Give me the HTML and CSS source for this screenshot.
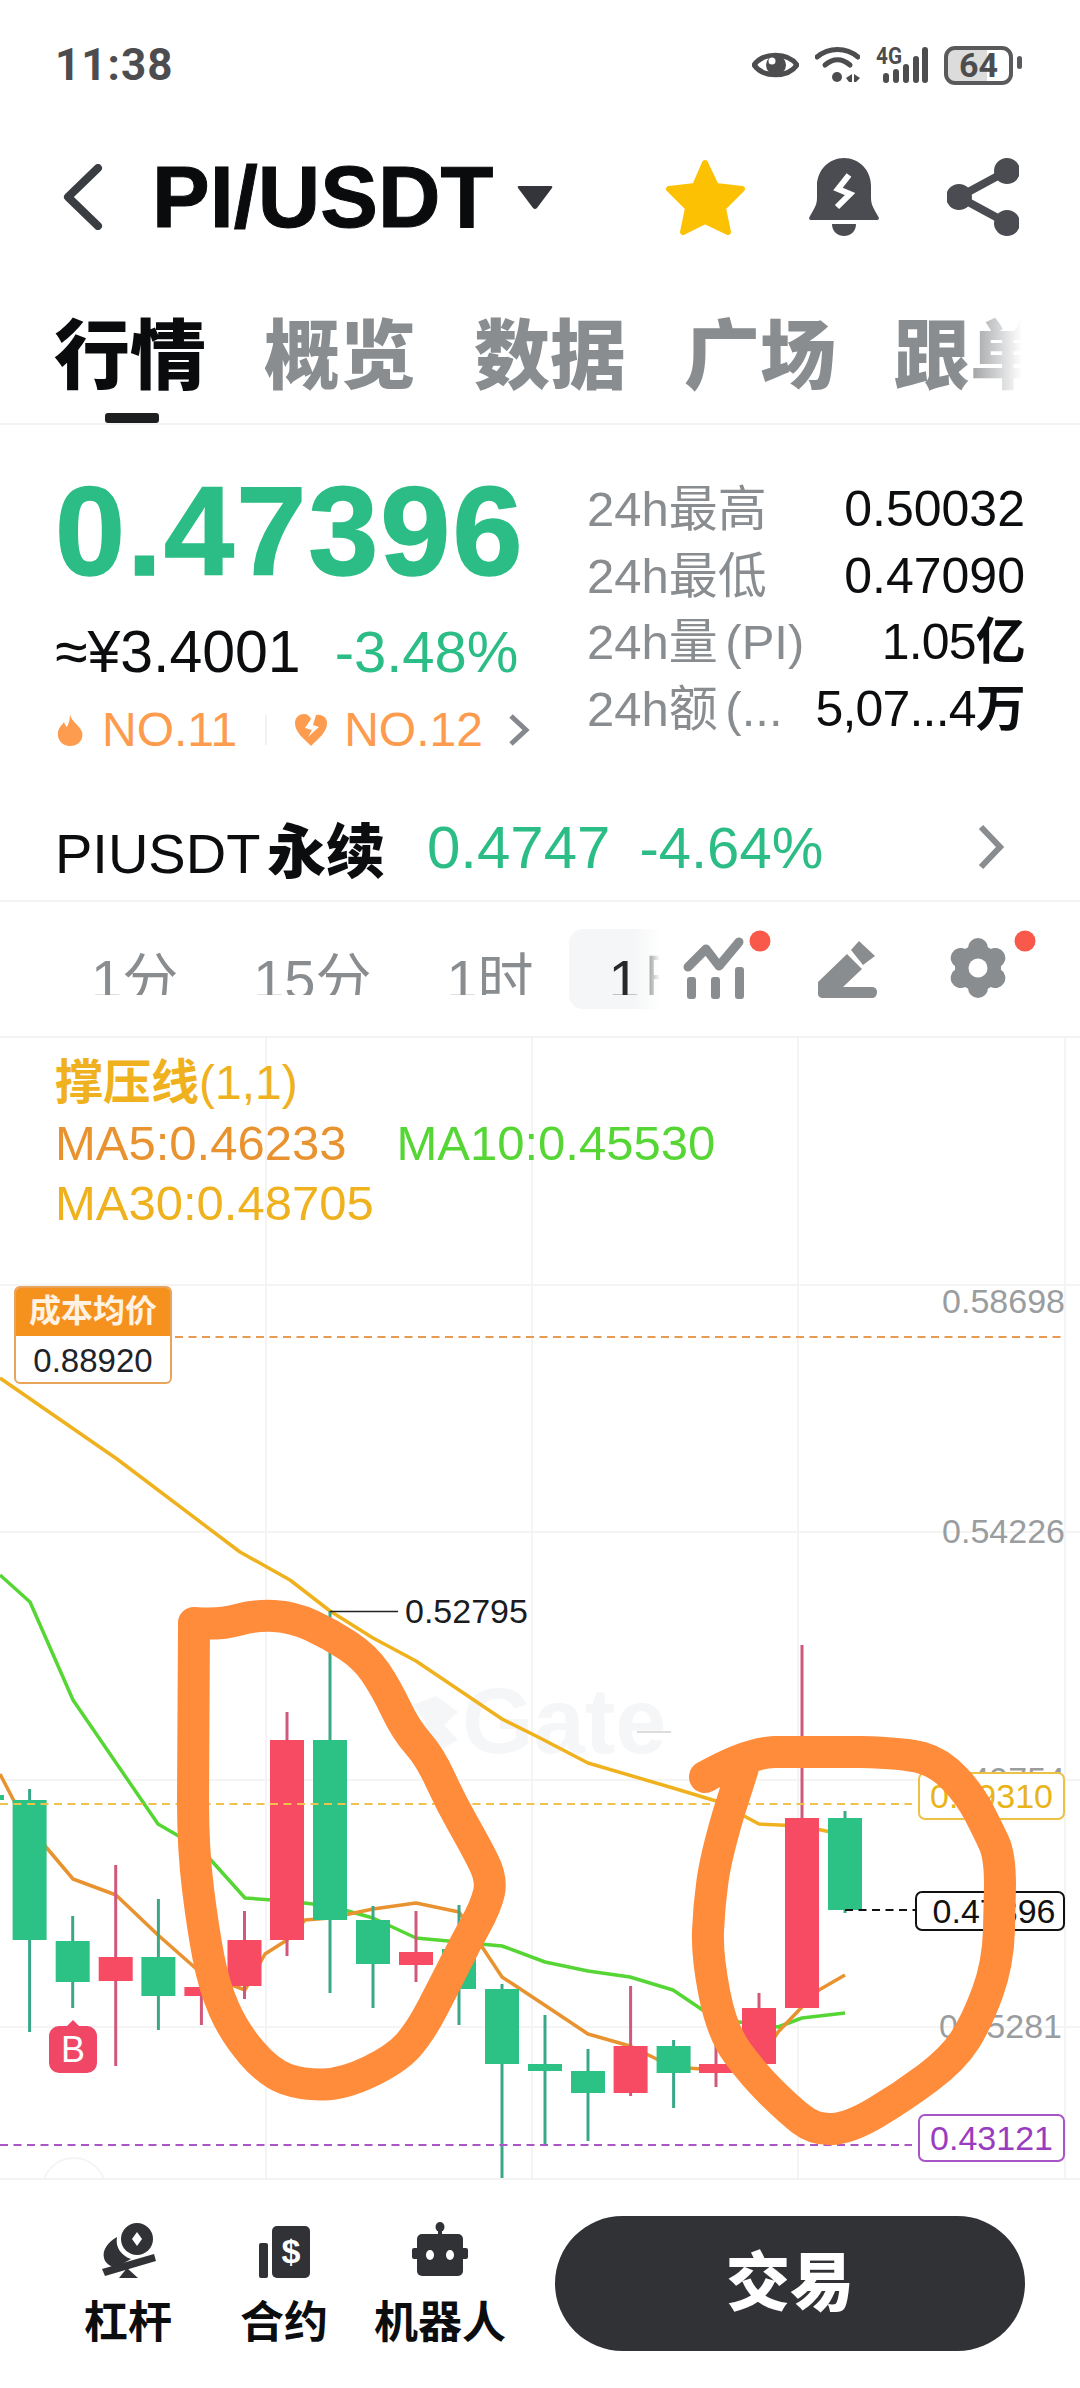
FILE: index.html
```html
<!DOCTYPE html>
<html lang="zh-CN">

<head>
    <meta charset="UTF-8">
    <meta name="viewport" content="width=device-width, initial-scale=1.0">
    <title>PI/USDT</title>
    <link rel="stylesheet" href="styles.css">
</head>

<body>
    <div class="statusbar">
        <span class="time">11:38</span>
        <div class="status-icons">
            <svg width="47" height="32" viewBox="0 0 47 32">
                <path class="ic-outline" d="M2 16C11 3 36 3 45 16C36 29 11 29 2 16Z" />
                <circle class="ic-fill" cx="24" cy="16" r="10" />
                <circle cx="20" cy="12" r="3.5" fill="#fff" />
            </svg>
            <svg width="45" height="36" viewBox="0 0 45 36">
                <path class="ic-outline" d="M2 10C14 0 31 0 43 10" />
                <path class="ic-outline" d="M10 18C18 11 27 11 35 18" />
                <circle class="ic-fill" cx="22" cy="30" r="5" />
                <path class="ic-fill" d="M37 27V35H34L31 31ZM39 27V35H41L45 31Z" />
            </svg>
            <svg width="52" height="36" viewBox="0 0 52 36">
                <text class="ic-4g" x="0" y="17" textLength="26" lengthAdjust="spacingAndGlyphs">4G</text>
                <rect class="ic-fill" x="7" y="26" width="6" height="10" rx="3" />
                <rect class="ic-fill" x="17" y="22" width="6" height="14" rx="3" />
                <rect class="ic-fill" x="27" y="17" width="6" height="19" rx="3" />
                <rect class="ic-fill" x="37" y="9" width="6" height="27" rx="3" />
                <rect class="ic-fill" x="46" y="0" width="6" height="36" rx="3" />
            </svg>
            <div class="battery">64</div>
        </div>
    </div>

    <div class="header">
        <svg class="back" width="42" height="66" viewBox="0 0 42 66">
            <path d="M36 4L6 33L36 62" />
        </svg>
        <span class="pair">PI/USDT</span>
        <svg class="caret" width="36" height="25" viewBox="0 0 36 25">
            <path d="M2 1H34Q36 1 35 3L20 23Q18 25 16 23L1 3Q0 1 2 1Z" />
        </svg>
        <svg class="star" width="81" height="77" viewBox="0 0 81 77">
            <path d="M40 4L51 27L77 30L58 49L63 73L40 62L18 73L23 49L4 30L30 27Z" />
        </svg>
        <svg class="bell" width="70" height="78" viewBox="0 0 70 78">
            <path d="M35 0C50 0 62 12 62 28V40C62 48 66 52 70 60Q70 62 68 62H2Q0 62 0 60C4 52 8 48 8 40V28C8 12 20 0 35 0Z" />
            <path d="M23 66H47C47 74 41 78 35 78C29 78 23 74 23 66Z" />
            <path class="bell-bolt" d="M40 17L29 31L41 36L28 49" />
        </svg>
        <svg class="share" width="72" height="78" viewBox="0 0 72 78">
            <path class="share-line" d="M60 13L12 39L60 65" />
            <circle cx="60" cy="13" r="13" />
            <circle cx="12" cy="39" r="13" />
            <circle cx="60" cy="65" r="13" />
        </svg>
    </div>

    <div class="tabs">
        <span class="tab active">行情</span>
        <span class="tab">概览</span>
        <span class="tab">数据</span>
        <span class="tab">广场</span>
        <span class="tab">跟单</span>
    </div>

    <div class="quote">
        <div class="quote-left">
            <div class="price">0.47396</div>
            <div class="sub-row">
                <span>≈¥3.4001</span>
                <span class="down">-3.48%</span>
            </div>
            <div class="rank-row">
                <svg width="26" height="32" viewBox="0 0 26 32">
                    <path d="M13 0C14 8 22 10 25 18C27 26 21 32 13 32C5 32 0 26 1 18C2 13 5 11 7 8C8 11 9 12 10 13C12 9 13 5 13 0Z" />
                </svg>
                <span class="rank-a">NO.11</span>
                <i class="rank-sep"></i>
                <svg class="rank-heart" width="32" height="32" viewBox="0 0 32 32">
                    <path d="M16 32C8 24 0 18 0 9C0 3 5 0 9 0C12 0 15 2 16 5L10 14L17 16L13 23L24 13L18 11L21 1C28 0 32 4 32 9C32 18 24 24 16 32Z" />
                </svg>
                <span class="rank-b">NO.12</span>
                <svg class="rank-more" width="22" height="32" viewBox="0 0 22 32">
                    <path d="M3 2L18 16L3 30" />
                </svg>
            </div>
        </div>
        <div class="stats">
            <div class="stat"><span class="stat-label">24h最高</span><span class="stat-value">0.50032</span></div>
            <div class="stat"><span class="stat-label">24h最低</span><span class="stat-value">0.47090</span></div>
            <div class="stat"><span class="stat-label">24h量 (PI)</span><span class="stat-value stat-tight">1.05<b>亿</b></span></div>
            <div class="stat"><span class="stat-label">24h额 (...</span><span class="stat-value stat-tight">5,07...4<b>万</b></span></div>
        </div>
    </div>

    <div class="perp">
        <span class="perp-name">PIUSDT <b>永续</b></span>
        <span class="perp-price">0.4747</span>
        <span class="perp-change">-4.64%</span>
        <svg class="perp-more" width="26" height="46" viewBox="0 0 26 46">
            <path d="M3 3L22 23L3 43" />
        </svg>
    </div>

    <div class="periods">
        <div class="period-list">
            <div class="period"><span>1分</span></div>
            <div class="period"><span>15分</span></div>
            <div class="period"><span>1时</span></div>
            <div class="period active"><span>1日</span></div>
        </div>
        <svg class="tool-chart" width="92" height="80" viewBox="0 0 92 80">
            <path class="tool-line" d="M8 38L26 20L39 37L59 13" />
            <rect class="tool-fill" x="7" y="48" width="9" height="22" rx="3" />
            <rect class="tool-fill" x="31" y="48" width="9" height="22" rx="3" />
            <rect class="tool-fill" x="55" y="38" width="9" height="32" rx="3" />
            <circle class="tool-dot" cx="80" cy="12" r="10.5" />
        </svg>
        <svg class="tool-pencil" width="60" height="80" viewBox="0 0 60 80">
            <path class="tool-fill" d="M29 25L44 40L25 58H55Q59 59 59 63Q59 68 55 69H4Q0 68 0 65V53Z" />
            <path class="tool-fill" d="M41 12L57 27L45 36L33 21Z" />
        </svg>
        <svg class="tool-gear" width="90" height="80" viewBox="0 0 90 80">
            <circle class="tool-fill" cx="29" cy="39" r="23" />
            <path class="gear-tooth" d="M29 19V59M11.7 29L46.3 49M46.3 29L11.7 49" />
            <circle cx="29" cy="39" r="9.5" fill="#fff" />
            <circle class="tool-dot" cx="76" cy="12" r="10.5" />
        </svg>
    </div>

    <div class="chart">
        <svg class="chart-canvas" width="1080" height="1140" viewBox="0 1038 1080 1140">
            <path class="grid" d="M266 1038V2178M532 1038V2178M798 1038V2178M1065 1038V2178M0 1285H1080M0 1532H1080M0 1780H1080M0 2027H1080" />
            <text class="watermark" x="462" y="1753">Gate</text>
            <path class="watermark-logo" d="M412 1705L436 1696L458 1712L444 1725L458 1740L436 1752L412 1736L426 1722Z" />
            <path class="watermark-mark" d="M637 1732H671" />

            <polyline class="ma30" points="0,1378 117,1459 240,1552 290,1580 330,1611 373,1638 416,1661 502,1719 540,1738 588,1763 673,1788 716,1801 759,1824 802,1826 845,1835" />
            <polyline class="ma10" points="0,1575 30,1602 73,1700 158,1824 201,1849 245,1898 287,1901 330,1906 373,1918 416,1938 459,1942 502,1946 545,1962 588,1971 630,1977 673,1990 716,2019 778,2027 802,2018 845,2013" />
            <polyline class="ma5" points="0,1774 14,1801 46,1847 73,1879 116,1895 158,1935 201,1973 245,1990 265,1954 287,1940 305,1920 330,1918 373,1909 416,1903 459,1912 502,1977 540,2002 588,2034 630,2046 673,2067 716,2070 759,2062 778,2032 802,2007 819,1990 845,1975" />

            <g class="candle-up">
                <rect x="-8" y="1795" width="12" height="5" />
                <line x1="29.6" x2="29.6" y1="1789" y2="2032" /><rect x="12.6" y="1800" width="34" height="140" />
                <line x1="72.7" x2="72.7" y1="1916" y2="2008" /><rect x="55.7" y="1941" width="34" height="41" />
                <line x1="158.4" x2="158.4" y1="1899" y2="2030" /><rect x="141.4" y="1957" width="34" height="39" />
                <line x1="330" x2="330" y1="1611" y2="1993" /><rect x="313" y="1740" width="34" height="180" />
                <line x1="373" x2="373" y1="1906" y2="2008" /><rect x="356" y="1920" width="34" height="44" />
                <line x1="459" x2="459" y1="1905" y2="2025" /><rect x="442" y="1949" width="34" height="40" />
                <line x1="502" x2="502" y1="1984" y2="2178" /><rect x="485" y="1989" width="34" height="75" />
                <line x1="545" x2="545" y1="2015" y2="2146" /><rect x="528" y="2064" width="34" height="7" />
                <line x1="588" x2="588" y1="2049" y2="2141" /><rect x="571" y="2071" width="34" height="22" />
                <line x1="673.6" x2="673.6" y1="2040" y2="2108" /><rect x="656.6" y="2046" width="34" height="27" />
                <line x1="845" x2="845" y1="1811" y2="1913" /><rect x="828" y="1818" width="34" height="92" />
            </g>
            <g class="candle-down">
                <line x1="115.7" x2="115.7" y1="1865" y2="2066" /><rect x="98.7" y="1957" width="34" height="24" />
                <line x1="201.4" x2="201.4" y1="1973" y2="2025" /><rect x="184.4" y="1987" width="34" height="9" />
                <line x1="244.5" x2="244.5" y1="1911" y2="1999" /><rect x="227.5" y="1940" width="34" height="46" />
                <line x1="287" x2="287" y1="1712" y2="1956" /><rect x="270" y="1740" width="34" height="200" />
                <line x1="416" x2="416" y1="1911" y2="1982" /><rect x="399" y="1952" width="34" height="13" />
                <line x1="630.6" x2="630.6" y1="1986" y2="2096" /><rect x="613.6" y="2046" width="34" height="47" />
                <line x1="716" x2="716" y1="2021" y2="2087" /><rect x="699" y="2064" width="34" height="9" />
                <line x1="759" x2="759" y1="1993" y2="2064" /><rect x="742" y="2008" width="34" height="56" />
                <line x1="802" x2="802" y1="1645" y2="2008" /><rect x="785" y="1818" width="34" height="190" />
            </g>

            <path class="dash-cost" d="M175 1337H1062" />
            <path class="dash-pos" d="M0 1804H912" />
            <path class="dash-low" d="M0 2145H912" />
            <path class="dash-last" d="M845 1910H915" />
            <path class="leader" d="M330 1611.5H398" />
        </svg>

        <div class="legend">
            <div class="legend-title"><b>撑压线</b>(1,1)</div>
            <div class="legend-row">
                <span class="legend-ma5">MA5:0.46233</span>
                <span class="legend-ma10">MA10:0.45530</span>
            </div>
            <div class="legend-row">
                <span class="legend-ma30">MA30:0.48705</span>
            </div>
        </div>

        <div class="cost-tag">
            <div class="cost-title">成本均价</div>
            <div class="cost-value">0.88920</div>
        </div>

        <span class="axis axis-1">0.58698</span>
        <span class="axis axis-2">0.54226</span>
        <span class="axis axis-3">0.49754</span>
        <span class="axis axis-4">0.45281</span>
        <span class="high-label">0.52795</span>

        <span class="tag tag-pos">0.49310</span>
        <span class="tag tag-last">0.47396</span>
        <span class="tag tag-low">0.43121</span>

        <span class="buy-mark">B</span>
        <i class="scroll-btn"></i>

        <!-- hand drawn circles sit over everything in the chart -->
        <svg class="chart-marks" width="1080" height="1140" viewBox="0 1038 1080 1140">
            <path class="scribble" d="M194 1623Q220 1625 237.5 1620Q255 1615 274 1616Q293 1617 311.5 1625.5Q330 1634 347.5 1645.5Q365 1657 375.5 1672.5Q386 1688 396 1709Q406 1730 418 1743.5Q430 1757 440.5 1780Q451 1803 463 1824Q475 1845 483.5 1862Q492 1879 489 1892.5Q486 1906 475.5 1925Q465 1944 454.5 1965Q444 1986 432 2009Q420 2032 408 2045.5Q396 2059 370 2071.5Q344 2084 323.5 2084.5Q303 2085 286 2079Q269 2073 251.5 2052.5Q234 2032 224 2009Q214 1986 208.5 1957.5Q203 1929 198 1889Q193 1849 193 1801L194 1623" />
            <path class="scribble" d="M705 1777Q747 1753 774.5 1752L860 1752Q905 1753 922.5 1758Q940 1763 955 1779Q970 1795 979 1812.5Q988 1830 994 1843Q1000 1856 1000 1885L999 1930Q998 1964 987.5 1992.5Q977 2021 965 2040Q953 2059 927.5 2078Q902 2097 876 2112.5Q850 2128 832.5 2129Q815 2130 801.5 2119.5Q788 2109 770.5 2091.5Q753 2074 737.5 2053Q722 2032 714.5 1994Q707 1956 708 1931Q709 1906 712.5 1881Q716 1856 729 1812L743 1768" />
        </svg>
    </div>

    <div class="bottom-bar">
        <div class="bar-item">
            <svg width="56" height="56" viewBox="0 0 56 56">
                <circle class="bar-ic" cx="37" cy="17" r="16" />
                <path d="M37 10L42 17L37 24L32 17Z" fill="#fff" />
                <path class="bar-ic" d="M17 15C8 20 2 28 4 36C5 41 10 44 15 46L31 37C22 34 15 26 17 15Z" />
                <path class="bar-ic" d="M2 47L54 32L56 39L5 54Z" />
                <path class="bar-ic" d="M27 46L38 56H19Z" />
            </svg>
            <span>杠杆</span>
        </div>
        <div class="bar-item">
            <svg width="52" height="56" viewBox="0 0 52 56">
                <rect class="bar-ic" x="1" y="21" width="9" height="35" rx="2" />
                <rect class="bar-ic" x="14" y="4" width="38" height="52" rx="5" />
                <text class="bar-dollar" x="33" y="41">$</text>
            </svg>
            <span>合约</span>
        </div>
        <div class="bar-item">
            <svg width="56" height="56" viewBox="0 0 56 56">
                <ellipse class="bar-ic" cx="28" cy="5" rx="4.5" ry="5" />
                <rect class="bar-ic" x="26" y="8" width="4" height="6" />
                <rect class="bar-ic" x="5" y="12" width="46" height="42" rx="5" />
                <rect class="bar-ic" x="0" y="26" width="56" height="11" rx="2" />
                <ellipse cx="18" cy="33" rx="4" ry="5" fill="#fff" />
                <ellipse cx="38" cy="33" rx="4" ry="5" fill="#fff" />
            </svg>
            <span>机器人</span>
        </div>
        <div class="trade-btn">交易</div>
    </div>
</body>

</html>
```

FILE: styles.css
```css
* {
    box-sizing: border-box;
}

body {
    margin: 0;
    width: 1080px;
    height: 2388px;
    overflow: hidden;
    background-color: #fff;
    color: #0c0d0f;
    font-family: "Liberation Sans", "Noto Sans CJK SC", sans-serif;
}

/* status bar */
.statusbar {
    height: 124px;
    padding: 6px 59px 0 55px;
    display: flex;
    align-items: center;
    justify-content: space-between;
}

.time {
    font-family: Roboto, sans-serif;
    font-size: 44px;
    font-weight: 700;
    letter-spacing: 1px;
    color: #4d4d4f;
}

.status-icons {
    display: flex;
    align-items: center;
    gap: 16px;
}

.ic-outline {
    fill: none;
    stroke: #4d4d4f;
    stroke-width: 5;
    stroke-linecap: round;
}

.ic-fill {
    fill: #4d4d4f;
}

.ic-4g {
    font-family: Roboto, sans-serif;
    font-size: 23px;
    font-weight: 700;
    fill: #4d4d4f;
}

.battery {
    position: relative;
    width: 69px;
    height: 39px;
    margin-right: 8px;
    border: 4px solid #5a5a5c;
    border-radius: 11px;
    background: linear-gradient(90deg, #dcdcdc 64%, #fff 64%);
    font-family: Roboto, sans-serif;
    font-size: 34px;
    font-weight: 700;
    line-height: 31px;
    text-align: center;
    color: #4d4d4f;
}

.battery::after {
    content: "";
    position: absolute;
    right: -13px;
    top: 6px;
    width: 5px;
    height: 13px;
    border-radius: 3px;
    background-color: #5a5a5c;
}

/* header */
.header {
    height: 146px;
    padding-left: 62px;
    display: flex;
    align-items: center;
    position: relative;
}

.back path {
    fill: none;
    stroke: #3a3d42;
    stroke-width: 8;
    stroke-linejoin: round;
    stroke-linecap: round;
}

.pair {
    margin-left: 48px;
    font-size: 86.5px;
    font-weight: 700;
    line-height: 90px;
    color: #0a0b0d;
    -webkit-text-stroke: 1px #0a0b0d;
}

.caret {
    margin-left: 24px;
}

.caret path {
    fill: #33353a;
}

.star {
    margin-left: 112px;
}

.star path {
    fill: #fdc104;
    stroke: #fdc104;
    stroke-width: 6;
    stroke-linejoin: round;
}

.bell {
    margin-left: 63px;
}

.bell path {
    fill: #4a4c52;
}

.bell .bell-bolt {
    fill: none;
    stroke: #fff;
    stroke-width: 6;
}

.share {
    margin-left: 68px;
    fill: #4a4c52;
}

.share-line {
    fill: none;
    stroke: #4a4c52;
    stroke-width: 8;
}

/* tabs */
.tabs {
    position: relative;
    height: 155px;
    padding: 49px 0 0 54px;
    display: flex;
    gap: 58px;
    border-bottom: 2px solid #f3f3f3;
    overflow: hidden;
}

.tabs::after {
    content: "";
    position: absolute;
    left: 960px;
    top: 0;
    width: 120px;
    height: 150px;
    background: linear-gradient(90deg, rgba(255, 255, 255, 0), #fff 62px);
}

.tab {
    position: relative;
    height: 104px;
    font-size: 76px;
    font-weight: 900;
    line-height: 76px;
    white-space: nowrap;
    color: #8a8d90;
}

.tab.active {
    color: #0a0b0d;
}

.tab.active::after {
    content: "";
    position: absolute;
    left: 51px;
    bottom: 0;
    width: 54px;
    height: 10px;
    border-radius: 3px;
    background-color: #1d1e20;
}

/* price block */
.quote {
    height: 369px;
    display: flex;
}

.quote-left {
    width: 587px;
    padding: 43px 0 0 55px;
}

.price {
    font-size: 126px;
    font-weight: 700;
    letter-spacing: 2px;
    line-height: 128px;
    white-space: nowrap;
    color: #2bbd85;
    -webkit-text-stroke: 1.5px #2bbd85;
}

.sub-row {
    margin-top: 28px;
    display: flex;
    gap: 34px;
    font-size: 59px;
    line-height: 56px;
    color: #0c0d0f;
}

.sub-row .down {
    font-size: 58px;
    color: #2bbd85;
}

.rank-row {
    margin: 27px 0 0 2px;
    display: flex;
    align-items: center;
    font-size: 48px;
    line-height: 46px;
    color: #fd9b4e;
}

.rank-row svg {
    flex: none;
    fill: #fd9b4e;
}

.rank-a,
.rank-b {
    margin-left: 19px;
}

.rank-b {
    margin-left: 17px;
}

.rank-sep {
    width: 2px;
    height: 30px;
    margin: 0 28px 0 28px;
    background-color: #f1f1f1;
}

.rank-row .rank-more {
    margin-left: 25px;
    fill: none;
}

.rank-more path {
    fill: none;
    stroke: #85888c;
    stroke-width: 5;
}

.stats {
    width: 438px;
    padding-top: 51px;
}

.stat {
    height: 66.7px;
    display: flex;
    align-items: baseline;
    justify-content: space-between;
    font-size: 49px;
    line-height: 66.7px;
    white-space: nowrap;
}

.stat-label {
    word-spacing: -6px;
    color: #8a8d90;
}

.stat-value {
    font-size: 50px;
    color: #0c0d0f;
}

.stat-tight {
    letter-spacing: -0.8px;
}

/* perpetual row */
.perp {
    height: 108px;
    padding: 0 76px 0 55px;
    display: flex;
    align-items: center;
    border-bottom: 2px solid #f3f3f3;
    font-size: 56px;
    white-space: nowrap;
}

.perp-name {
    word-spacing: -8px;
}

.perp-name b {
    font-size: 59px;
    font-weight: 900;
}

.perp-price {
    margin-left: 42px;
    font-size: 60px;
    color: #2bbd85;
}

.perp-change {
    margin-left: 29px;
    font-size: 58px;
    color: #2bbd85;
}

.perp-more {
    margin-left: auto;
}

.perp-more path {
    fill: none;
    stroke: #8a8d90;
    stroke-width: 6;
}

/* period row */
.periods {
    height: 136px;
    display: flex;
    align-items: center;
    border-bottom: 2px solid #f3f3f3;
}

.period-list {
    position: relative;
    width: 660px;
    height: 80px;
    padding-left: 91px;
    display: flex;
    gap: 75px;
    overflow: hidden;
}

.period-list::after {
    content: "";
    position: absolute;
    right: 0;
    top: 0;
    width: 26px;
    height: 80px;
    background: linear-gradient(90deg, rgba(255, 255, 255, 0), #fff);
}

.period {
    flex: none;
    height: 66px;
    overflow: hidden;
    font-size: 56px;
    line-height: 102px;
    white-space: nowrap;
    color: #8a8d90;
}

.period.active {
    height: 80px;
    width: 200px;
    margin-left: -40px;
    padding-left: 40px;
    border-radius: 14px;
    background-color: #f5f6f7;
    color: #26282c;
}

.period.active span {
    display: block;
    height: 66px;
    overflow: hidden;
}

.tool-chart {
    margin-left: 20px;
}

.tool-pencil {
    margin-left: 46px;
}

.tool-gear {
    margin-left: 71px;
}

.tool-line {
    fill: none;
    stroke: #8a8d90;
    stroke-width: 9;
    stroke-linecap: round;
    stroke-linejoin: round;
}

.tool-fill {
    fill: #8a8d90;
}

.tool-dot {
    fill: #f9594a;
}

.gear-tooth {
    fill: none;
    stroke: #8a8d90;
    stroke-width: 20;
    stroke-linecap: round;
}

/* chart */
.chart {
    position: relative;
    height: 1142px;
    border-bottom: 2px solid #f3f3f3;
    overflow: hidden;
}

.chart-canvas,
.chart-marks {
    position: absolute;
    left: 0;
    top: 0;
}

.grid {
    fill: none;
    stroke: #f4f4f5;
    stroke-width: 2;
}

.watermark {
    font-size: 92px;
    font-weight: 700;
    fill: #f5f6f7;
}

.watermark-logo {
    fill: #f5f6f7;
}

.watermark-mark {
    stroke: #b9b9b9;
    stroke-width: 1;
}

.ma5,
.ma10,
.ma30 {
    fill: none;
    stroke-width: 3.5;
    stroke-linejoin: round;
}

.ma5 {
    stroke: #e8932f;
}

.ma10 {
    stroke: #56d634;
}

.ma30 {
    stroke: #efb21e;
}

.candle-up rect {
    fill: #2cc185;
}

.candle-up line {
    stroke: #3aa888;
    stroke-width: 3;
}

.candle-down rect {
    fill: #f74b64;
}

.candle-down line {
    stroke: #d0587a;
    stroke-width: 3;
}

.dash-cost,
.dash-pos,
.dash-low,
.dash-last {
    fill: none;
    stroke-width: 2;
    stroke-dasharray: 8 5.5;
}

.dash-cost {
    stroke: #e89a50;
}

.dash-pos {
    stroke: #eec24c;
}

.dash-low {
    stroke: #ab55c9;
}

.dash-last {
    stroke: #111;
}

.leader {
    fill: none;
    stroke: #222;
    stroke-width: 1.5;
}

.legend {
    position: relative;
    padding: 15px 0 0 55px;
    font-size: 49px;
    line-height: 60px;
    white-space: nowrap;
}

.legend-title {
    height: 60px;
    font-size: 48px;
    color: #efb21e;
}

.legend-row {
    display: flex;
    gap: 50px;
}

.legend-ma5 {
    color: #e8932f;
}

.legend-ma10 {
    color: #56d634;
}

.legend-ma30 {
    color: #efb21e;
}

.cost-tag {
    position: absolute;
    left: 14px;
    top: 248px;
    width: 158px;
    height: 98px;
    border: 2px solid #e9a45c;
    border-radius: 6px;
    background-color: #fff;
    overflow: hidden;
    text-align: center;
}

.cost-title {
    height: 48px;
    background-color: #f5921e;
    font-size: 32px;
    font-weight: 700;
    line-height: 46px;
    color: #fff2e2;
}

.cost-value {
    font-size: 33px;
    line-height: 50px;
    color: #1f2329;
}

.axis {
    position: absolute;
    right: 15px;
    font-size: 34px;
    line-height: 40px;
    color: #9a9da0;
}

.axis-1 {
    top: 243px;
}

.axis-2 {
    top: 473px;
}

.axis-3 {
    top: 721px;
}

.axis-4 {
    top: 968px;
    right: 18px;
}

.high-label {
    position: absolute;
    left: 405px;
    top: 553px;
    font-size: 34px;
    line-height: 40px;
    color: #1b1c1f;
}

.tag {
    position: absolute;
    left: 918px;
    width: 147px;
    height: 48px;
    border: 2px solid;
    border-radius: 7px;
    background-color: #fff;
    font-size: 34px;
    line-height: 44px;
    text-align: center;
}

.tag-pos {
    top: 734px;
    border-color: #edc244;
    color: #e8b418;
}

.tag-last {
    left: 915px;
    top: 853px;
    width: 150px;
    height: 40px;
    border-color: #111;
    line-height: 36px;
    padding-left: 8px;
    color: #111;
}

.tag-low {
    top: 1076px;
    border-color: #a855c8;
    color: #9a3cc0;
}

.buy-mark {
    position: absolute;
    left: 49px;
    top: 988px;
    width: 48px;
    height: 47px;
    border-radius: 10px;
    background-color: #ef4765;
    font-size: 36px;
    line-height: 47px;
    text-align: center;
    color: #fff;
}

.buy-mark::before {
    content: "";
    position: absolute;
    left: 18px;
    top: -6px;
    border: 6px solid transparent;
    border-top: 0;
    border-bottom-color: #ef4765;
}

.scroll-btn {
    position: absolute;
    left: 41px;
    top: 1119px;
    width: 66px;
    height: 66px;
    border: 2px solid #f5f5f5;
    border-radius: 50%;
}

.scribble {
    fill: none;
    stroke: #ff8c3a;
    stroke-width: 32;
    stroke-linecap: round;
    stroke-linejoin: round;
}

/* bottom bar */
.bottom-bar {
    padding: 36px 0 0 50px;
    display: flex;
}

.bar-item {
    width: 156px;
    padding-top: 6px;
    display: flex;
    flex-direction: column;
    align-items: center;
    gap: 24px;
    font-size: 44px;
    font-weight: 700;
    line-height: 42px;
    white-space: nowrap;
    color: #0c0d0f;
}

.bar-ic {
    fill: #303236;
}

.bar-dollar {
    font-size: 34px;
    font-weight: 700;
    text-anchor: middle;
    fill: #fff;
}

.trade-btn {
    width: 470px;
    height: 135px;
    margin-left: 37px;
    border-radius: 68px;
    background-color: #303236;
    font-size: 64px;
    font-weight: 900;
    line-height: 135px;
    text-align: center;
    color: #fff;
}
```
